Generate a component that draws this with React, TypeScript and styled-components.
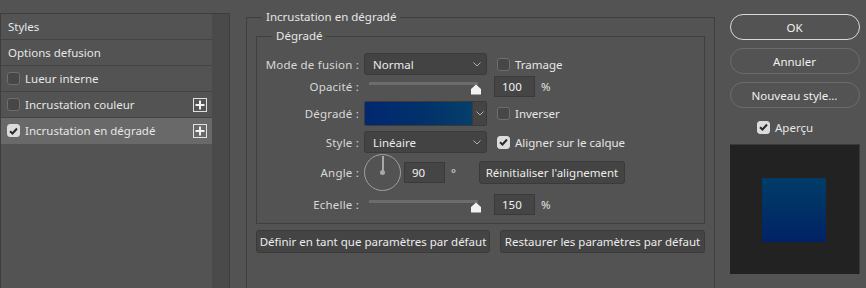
import React from "react";
import styled, { createGlobalStyle } from "styled-components";

const Global = createGlobalStyle`
  html, body { margin: 0; padding: 0; background: #535353; }
  body { font-family: "Noto Sans", "Open Sans", sans-serif; font-size: 11px; color: #e4e4e4; }
  * { box-sizing: border-box; }
`;

const Page = styled.div`
  display: flex;
  align-items: flex-start;
  width: 866px;
  height: 288px;
  overflow: hidden;
  background: #535353;
`;

/* ---------- left list ---------- */
const LeftPanel = styled.div`
  margin-top: 13px;
  width: 230px;
  height: 275px;
  display: flex;
  border: 1px solid #3e3e3e;
  border-bottom: none;
`;
const List = styled.div`
  flex: 1;
  display: flex;
  flex-direction: column;
`;
const Strip = styled.div`
  width: 17px;
  background: #4a4a4a;
`;
const ListRow = styled.div<{ $selected?: boolean; $indent?: boolean }>`
  height: 26px;
  display: flex;
  align-items: center;
  padding-left: ${(p) => (p.$indent ? "6px" : "7px")};
  padding-right: 5px;
  background: ${(p) => (p.$selected ? "#696969" : "transparent")};
  border-bottom: 1px solid ${(p) => (p.$selected ? "transparent" : "#444444")};
  color: #e6e6e6;
  gap: 5px;
  font-size: 11.5px;
`;
const RowText = styled.span`
  flex: 1;
  white-space: nowrap;
`;
const PlusBox = styled.span`
  width: 14px;
  height: 14px;
  border: 1px solid #e0e0e0;
  display: flex;
  align-items: center;
  justify-content: center;
`;

/* ---------- checkbox ---------- */
const Box = styled.span<{ $checked?: boolean }>`
  width: 13px;
  height: 13px;
  border-radius: 3px;
  flex: none;
  display: inline-flex;
  align-items: center;
  justify-content: center;
  background: ${(p) => (p.$checked ? "#dcdcdc" : "#474747")};
  border: 1px solid ${(p) => (p.$checked ? "#dcdcdc" : "#6e6e6e")};
`;
const Check = ({ checked }: { checked?: boolean }) => (
  <Box $checked={checked}>
    {checked && (
      <svg width="9" height="8" viewBox="0 0 9 8">
        <path d="M1 4.2 L3.5 6.5 L8 1.5" stroke="#2a2a2a" strokeWidth="2" fill="none" />
      </svg>
    )}
  </Box>
);

const CheckLabel = styled.label`
  display: flex;
  align-items: center;
  gap: 5px;
  height: 16px;
  color: #e6e6e6;
  white-space: nowrap;
  font-size: 11.5px;
`;

/* ---------- middle ---------- */
const Middle = styled.div`
  margin-left: 16px;
  margin-top: 9px;
  width: 469px;
`;
const Group = styled.fieldset<{ $inner?: boolean }>`
  margin: ${(p) => (p.$inner ? "3px 0 0 0" : "0")};
  min-inline-size: 0;
  border: 1px solid #3f3f3f;
  border-bottom: ${(p) => (p.$inner ? "1px solid #3f3f3f" : "none")};
  padding: ${(p) => (p.$inner ? "9px 0 8px 0" : "0 9px 0 9px")};
  height: ${(p) => (p.$inner ? "auto" : "279px")};
`;
const Legend = styled.legend<{ $inner?: boolean }>`
  margin-left: ${(p) => (p.$inner ? "15px" : "6px")};
  padding: 0 4px;
  line-height: 16px;
  color: #e6e6e6;
  font-size: 11.5px;
`;
const FormRow = styled.div<{ $h: number; $mt?: number }>`
  display: flex;
  align-items: center;
  height: ${(p) => p.$h}px;
  margin-top: ${(p) => p.$mt ?? 0}px;
`;
const Label = styled.span`
  width: 102px;
  text-align: right;
  margin-right: 5px;
  color: #d8d8d8;
  white-space: nowrap;
  font-size: 11.5px;
  letter-spacing: 0.2px;
`;
const Select = styled.div`
  width: 123px;
  height: 22px;
  border: 1px solid #3a3a3a;
  border-radius: 3px;
  background: #434343;
  display: flex;
  align-items: center;
  padding-left: 8px;
  padding-right: 5px;
  margin-right: 10px;
  color: #ececec;
  font-size: 11.5px;
  justify-content: space-between;
`;
const Chevron = () => (
  <svg width="8" height="5" viewBox="0 0 8 5">
    <path d="M0.5 0.5 L4 4 L7.5 0.5" stroke="#b0b0b0" strokeWidth="1" fill="none" />
  </svg>
);
const GradientPicker = styled.div`
  width: 123px;
  height: 25px;
  display: flex;
  border: 1px solid #3a3a3a;
  border-radius: 2px;
  margin-right: 10px;
  overflow: hidden;
`;
const Swatch = styled.div`
  flex: 1;
  background: linear-gradient(90deg, #012870 0%, #01306b 50%, #053f69 100%);
`;
const SwatchArrow = styled.div`
  width: 14px;
  background: #444444;
  border-left: 1px solid #3a3a3a;
  display: flex;
  align-items: center;
  justify-content: center;
`;
const SliderWrap = styled.div`
  position: relative;
  width: 123px;
  height: 20px;
  margin-right: 7px;
`;
const Track = styled.div`
  position: absolute;
  left: 5px;
  top: 5px;
  width: 109px;
  height: 3px;
  background: #6c6c6c;
`;
const Thumb = styled.svg`
  position: absolute;
  left: 106px;
  top: 7px;
`;
const Slider = () => (
  <SliderWrap>
    <Track />
    <Thumb width="12" height="11" viewBox="0 0 12 11">
      <path d="M6 0.5 L11 5 L11 10 Q11 10.5 10.5 10.5 L1.5 10.5 Q1 10.5 1 10 L1 5 Z" fill="#f2f2f2" />
    </Thumb>
  </SliderWrap>
);
const Input = styled.div`
  width: 41px;
  height: 21px;
  background: #454545;
  border: 1px solid #3a3a3a;
  display: flex;
  align-items: center;
  padding-left: 7px;
  color: #f0f0f0;
  font-size: 11.5px;
`;
const Unit = styled.span`
  margin-left: 6px;
  color: #e0e0e0;
  font-size: 11.5px;
`;
const Dial = styled.div`
  position: relative;
  width: 37px;
  height: 37px;
  border: 1px solid #a0a0a0;
  border-radius: 50%;
  margin-right: 3px;
`;
const DialNeedle = styled.div`
  position: absolute;
  left: 16.5px;
  top: 1px;
  width: 2px;
  height: 17px;
  background: #a8a8a8;
`;
const DialDot = styled.div`
  position: absolute;
  left: 15px;
  top: 15px;
  width: 5px;
  height: 5px;
  border-radius: 50%;
  background: #a8a8a8;
`;
const Btn = styled.div<{ $w: number; $ml?: number }>`
  width: ${(p) => p.$w}px;
  margin-left: ${(p) => p.$ml ?? 0}px;
  height: 23px;
  background: #444444;
  border: 1px solid #3a3a3a;
  border-radius: 3px;
  display: flex;
  align-items: center;
  justify-content: center;
  color: #ececec;
  white-space: nowrap;
  font-size: 11.5px;
`;
const BottomBar = styled.div`
  display: flex;
  gap: 10px;
  margin-top: 6px;
`;

/* ---------- right ---------- */
const Right = styled.div`
  margin-left: 14px;
  margin-top: 14px;
  width: 131px;
  display: flex;
  flex-direction: column;
  align-items: center;
`;
const Pill = styled.div<{ $primary?: boolean; $mt: number }>`
  width: 130px;
  height: 26px;
  margin-top: ${(p) => p.$mt}px;
  border: ${(p) => (p.$primary ? "1.5px solid #dadada" : "1px solid #6c6c6c")};
  border-radius: 13px;
  display: flex;
  align-items: center;
  justify-content: center;
  color: #f0f0f0;
  font-size: 11.5px;
`;
const PreviewCheck = styled.div`
  margin-top: 11px;
  align-self: flex-start;
  margin-left: 28px;
`;
const Preview = styled.div`
  margin-top: 9px;
  width: 130px;
  height: 130px;
  background: #222222;
  border-top: 1px solid #3a3a3a;
  border-right: 1px solid #3a3a3a;
  display: flex;
  align-items: center;
  justify-content: center;
`;
const PreviewSquare = styled.div`
  width: 64px;
  height: 64px;
  background: linear-gradient(180deg, #003c69 0%, #003066 50%, #012266 100%);
`;

const Plus = () => (
  <PlusBox>
    <svg width="10" height="10" viewBox="0 0 10 10">
      <rect x="4" y="0.5" width="2" height="9" fill="#f0f0f0" />
      <rect x="0.5" y="4" width="9" height="2" fill="#f0f0f0" />
    </svg>
  </PlusBox>
);

export default function App() {
  return (
    <>
      <Global />
      <Page>
        <LeftPanel>
          <List>
            <ListRow><RowText>Styles</RowText></ListRow>
            <ListRow><RowText>Options defusion</RowText></ListRow>
            <ListRow $indent><Check /><RowText>Lueur interne</RowText></ListRow>
            <ListRow $indent><Check /><RowText>Incrustation couleur</RowText><Plus /></ListRow>
            <ListRow $indent $selected><Check checked /><RowText>Incrustation en dégradé</RowText><Plus /></ListRow>
          </List>
          <Strip />
        </LeftPanel>

        <Middle>
          <Group>
            <Legend>Incrustation en dégradé</Legend>
            <Group $inner>
              <Legend $inner>Dégradé</Legend>
              <FormRow $h={22}>
                <Label>Mode de fusion :</Label>
                <Select>Normal<Chevron /></Select>
                <CheckLabel><Check />Tramage</CheckLabel>
              </FormRow>
              <FormRow $h={21} $mt={1}>
                <Label>Opacité :</Label>
                <Slider />
                <Input>100</Input>
                <Unit>%</Unit>
              </FormRow>
              <FormRow $h={25} $mt={4}>
                <Label>Dégradé :</Label>
                <GradientPicker><Swatch /><SwatchArrow><Chevron /></SwatchArrow></GradientPicker>
                <CheckLabel><Check />Inverser</CheckLabel>
              </FormRow>
              <FormRow $h={22} $mt={5}>
                <Label>Style :</Label>
                <Select>Linéaire<Chevron /></Select>
                <CheckLabel><Check checked />Aligner sur le calque</CheckLabel>
              </FormRow>
              <FormRow $h={37} $mt={1}>
                <Label>Angle :</Label>
                <Dial><DialNeedle /><DialDot /></Dial>
                <Input>90</Input>
                <Unit>°</Unit>
                <Btn $w={146} $ml={23}>Réinitialiser l'alignement</Btn>
              </FormRow>
              <FormRow $h={21} $mt={3}>
                <Label>Echelle :</Label>
                <Slider />
                <Input>150</Input>
                <Unit>%</Unit>
              </FormRow>
            </Group>
            <BottomBar>
              <Btn $w={234}>Définir en tant que paramètres par défaut</Btn>
              <Btn $w={205}>Restaurer les paramètres par défaut</Btn>
            </BottomBar>
          </Group>
        </Middle>

        <Right>
          <Pill $primary $mt={0}>OK</Pill>
          <Pill $mt={8}>Annuler</Pill>
          <Pill $mt={8}>Nouveau style...</Pill>
          <PreviewCheck><CheckLabel><Check checked />Aperçu</CheckLabel></PreviewCheck>
          <Preview><PreviewSquare /></Preview>
        </Right>
      </Page>
    </>
  );
}
